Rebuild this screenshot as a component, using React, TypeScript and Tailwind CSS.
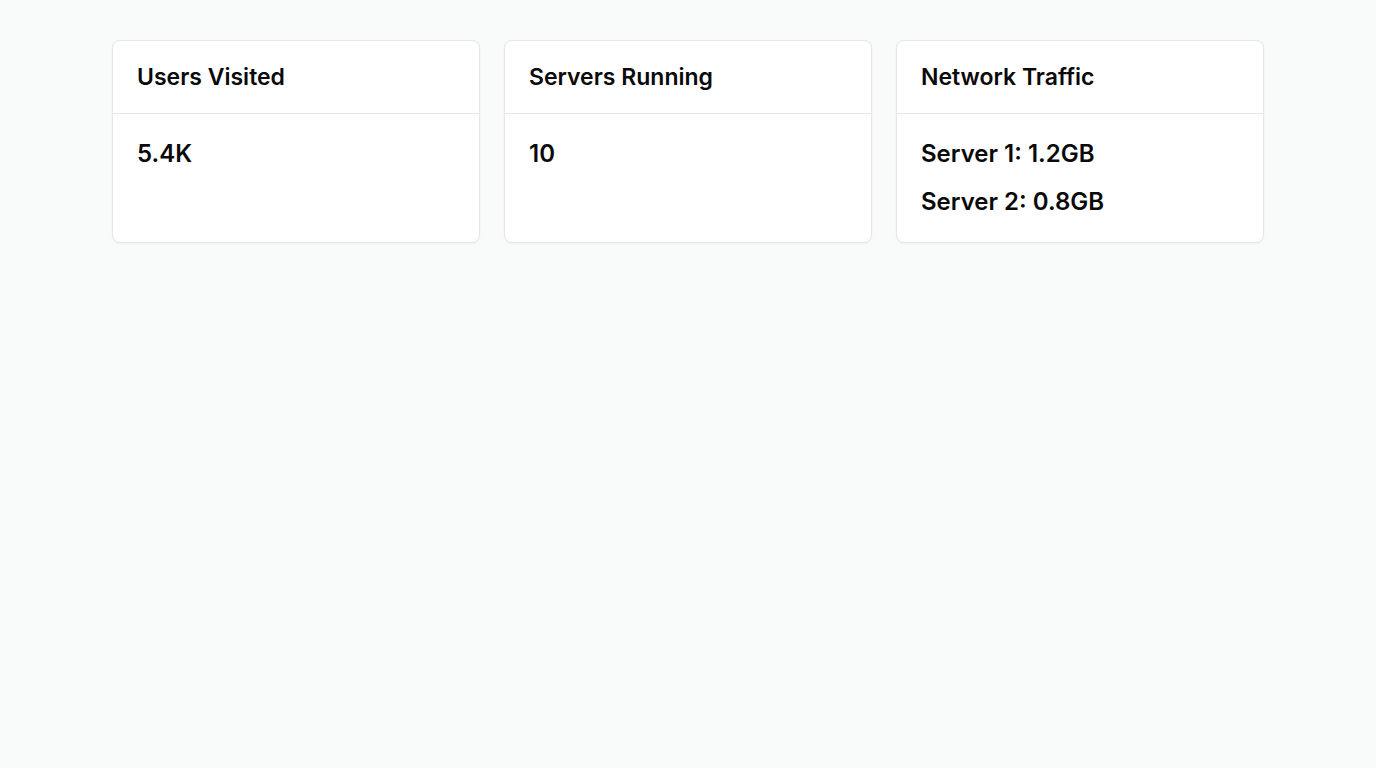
const cards = [
  { title: 'Users Visited', values: ['5.4K'] },
  { title: 'Servers Running', values: ['10'] },
  { title: 'Network Traffic', values: ['Server 1: 1.2GB', 'Server 2: 0.8GB'] },
];

export default function App() {
  return (
    <div className="min-h-screen bg-[#f9fafa] font-['Inter',sans-serif] text-[#0a0a0a]">
      <div className="max-w-6xl mx-auto pt-10">
        <div className="grid grid-cols-3 gap-6">
          {cards.map((card) => (
            <div key={card.title} className="bg-white border border-[#e5e7eb] rounded-lg shadow-xs">
              <div className="px-6 py-6 border-b border-[#e5e7eb]">
                <h2 className="text-[23px] leading-6 font-semibold">{card.title}</h2>
              </div>
              <div className="p-6 flex flex-col gap-4">
                {card.values.map((v) => (
                  <p key={v} className="text-2xl leading-8 font-semibold">{v}</p>
                ))}
              </div>
            </div>
          ))}
        </div>
      </div>
    </div>
  );
}
